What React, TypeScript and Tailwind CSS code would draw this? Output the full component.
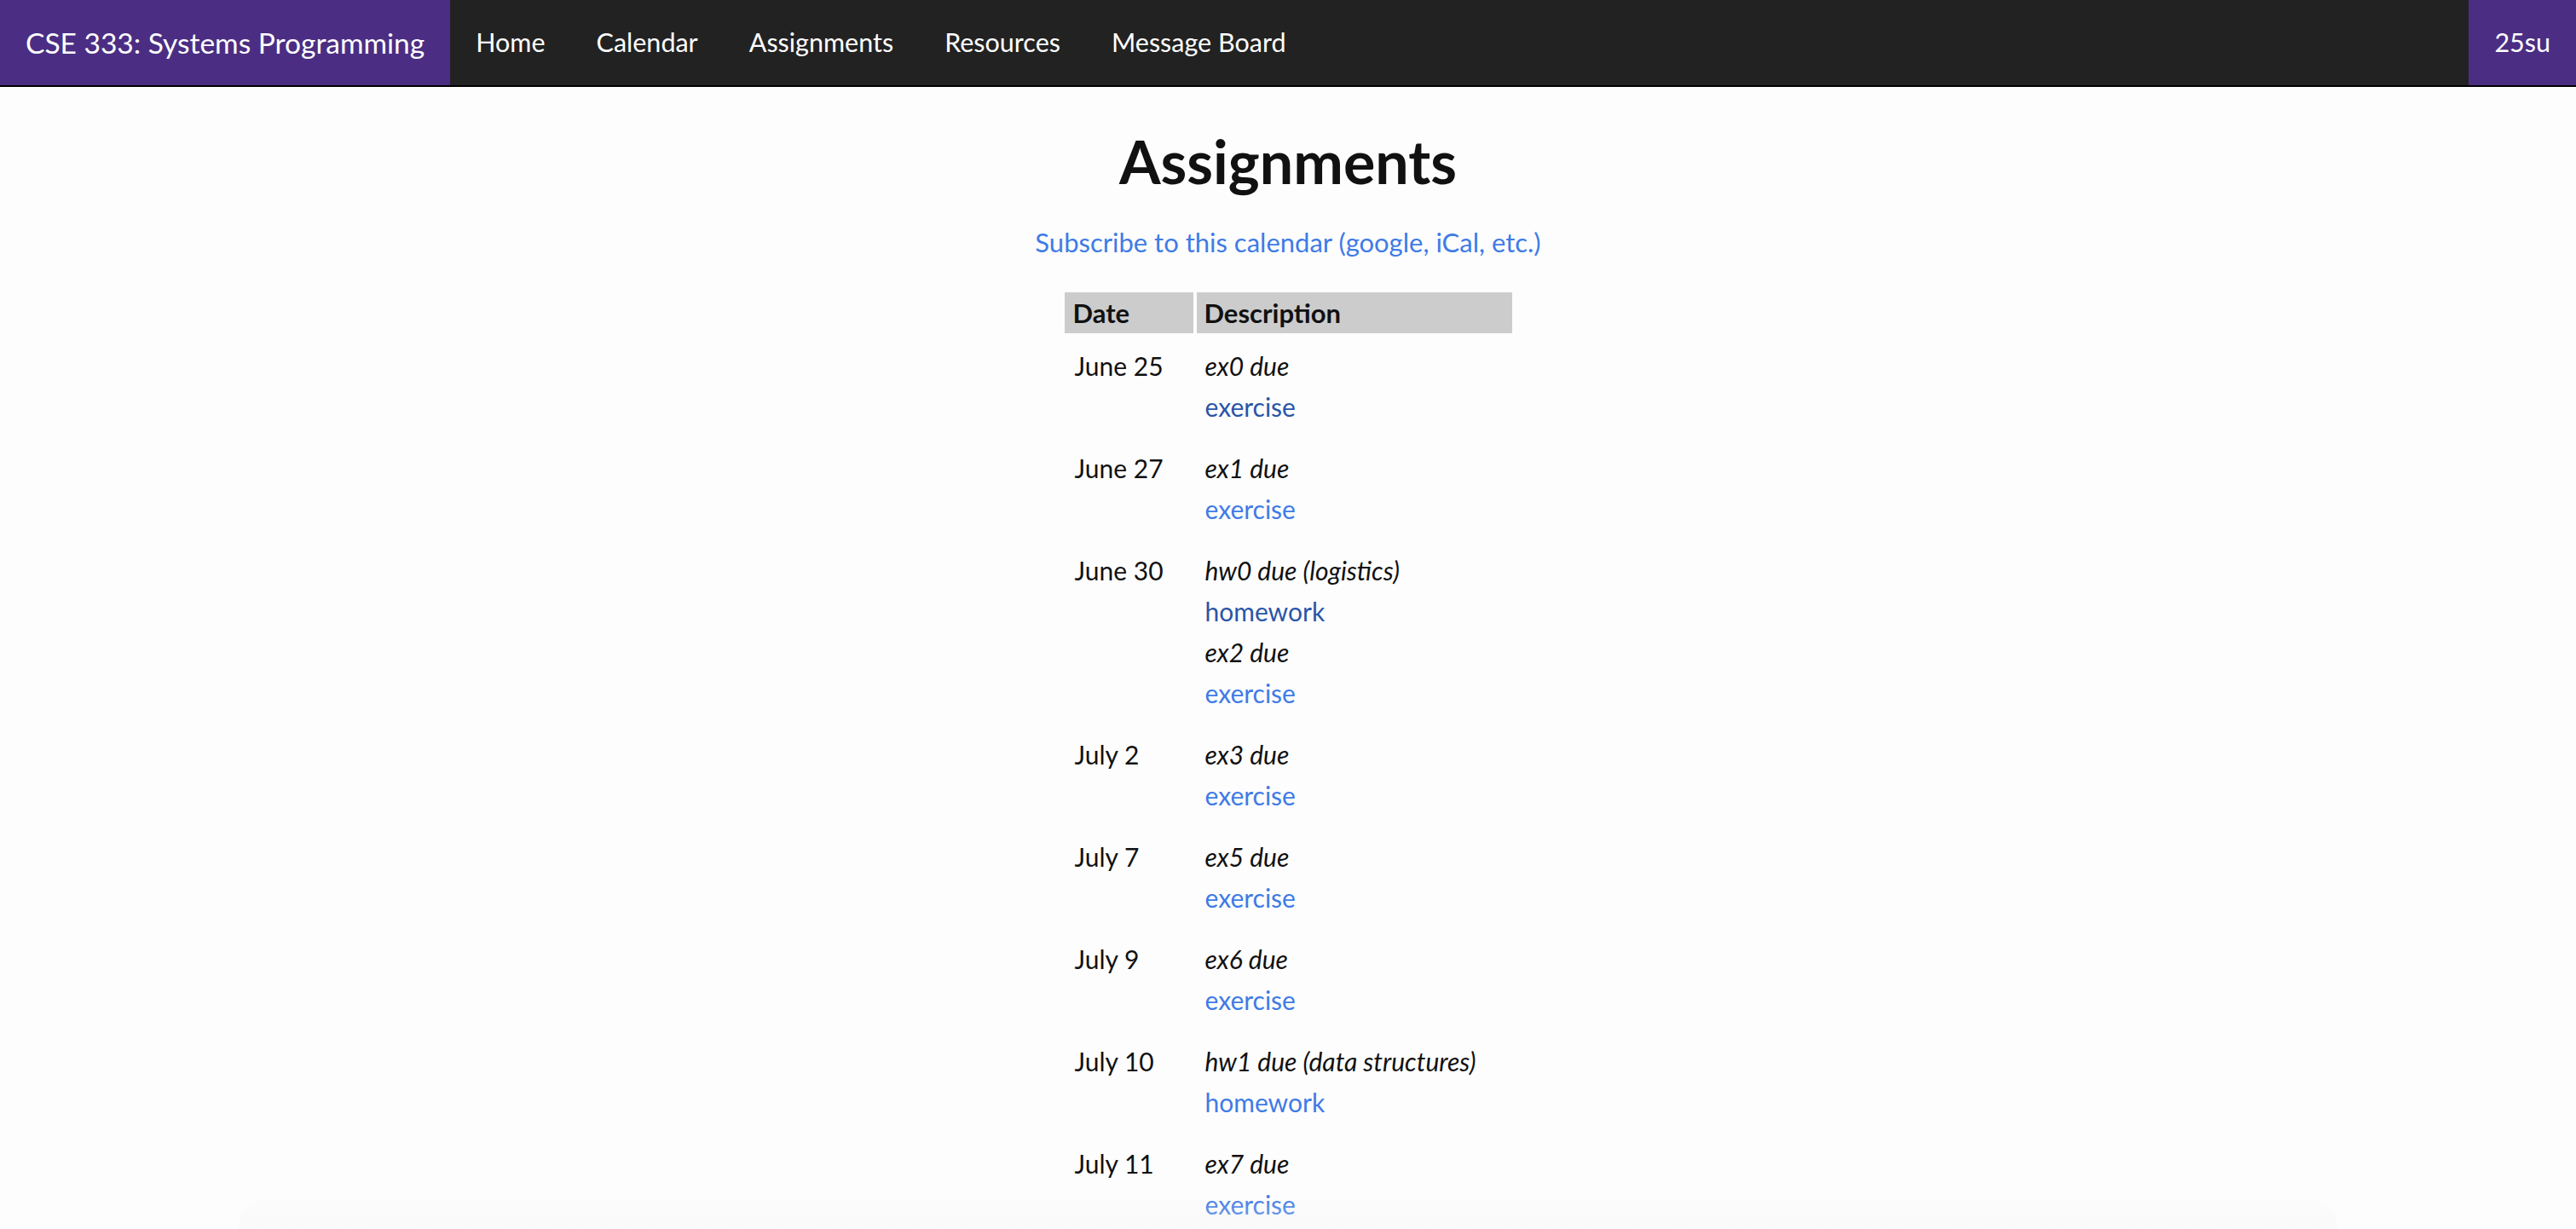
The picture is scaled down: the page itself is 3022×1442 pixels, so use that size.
import React from 'react';

type Item = { title: string; kind: string; visited?: boolean };
type Row = { date: string; items: Item[] };

const rows: Row[] = [
  { date: 'June 25', items: [{ title: 'ex0 due', kind: 'exercise', visited: true }] },
  { date: 'June 27', items: [{ title: 'ex1 due', kind: 'exercise' }] },
  {
    date: 'June 30',
    items: [
      { title: 'hw0 due (logistics)', kind: 'homework', visited: true },
      { title: 'ex2 due', kind: 'exercise' },
    ],
  },
  { date: 'July 2', items: [{ title: 'ex3 due', kind: 'exercise' }] },
  { date: 'July 7', items: [{ title: 'ex5 due', kind: 'exercise' }] },
  { date: 'July 9', items: [{ title: 'ex6 due', kind: 'exercise' }] },
  { date: 'July 10', items: [{ title: 'hw1 due (data structures)', kind: 'homework' }] },
  { date: 'July 11', items: [{ title: 'ex7 due', kind: 'exercise' }] },
  { date: 'July 14', items: [{ title: 'ex8 due', kind: 'exercise' }] },
  { date: 'July 16', items: [{ title: 'ex9 due', kind: 'exercise' }] },
];

const navLinks = ['Home', 'Calendar', 'Assignments', 'Resources', 'Message Board'];

const App = () => {
  return (
    <div className="min-h-screen bg-[#fdfdfd] text-[#111] font-['Lato','Open_Sans',sans-serif]">
      <nav className="flex h-[102px] bg-[#222] border-b-2 border-black text-white text-[30.5px]">
        <div className="flex items-center bg-[#4b2e83] px-[30px] text-[33.5px]">CSE 333: Systems Programming</div>
        {navLinks.map((link) => (
          <a key={link} href="#" className="flex items-center px-[30px]">
            {link}
          </a>
        ))}
        <div className="ml-auto flex items-center bg-[#4b2e83] px-[30px]">25su</div>
      </nav>

      <main className="flex flex-col items-center pt-[44px] pb-10">
        <h1 className="text-[70px] leading-[86px] font-bold">Assignments</h1>
        <a href="#" className="mt-[28px] text-[31px] leading-[48px] text-[#3f7be6]">
          Subscribe to this calendar (google, iCal, etc.)
        </a>

        <table className="mt-[31px] border-separate border-spacing-[4px] text-[30px] leading-[48px]">
          <thead>
            <tr className="bg-[#ccc]">
              <th className="w-[151px] pl-[10px] text-left font-bold text-[31px]">Date</th>
              <th className="w-[370px] pl-[9px] text-left font-bold text-[31px]">Description</th>
            </tr>
          </thead>
          <tbody>
            {rows.map((row) => (
              <tr key={row.date}>
                <td className="align-top pl-[12px] py-[10px]">{row.date}</td>
                <td className="align-top pl-[10px] py-[10px]">
                  {row.items.map((item) => (
                    <div key={item.title}>
                      <div className="italic">{item.title}</div>
                      <a
                        href="#"
                        className={item.visited ? 'block text-[#2a55a8]' : 'block text-[#3f7be6]'}
                      >
                        {item.kind}
                      </a>
                    </div>
                  ))}
                </td>
              </tr>
            ))}
          </tbody>
        </table>
      </main>

      <div className="pointer-events-none fixed bottom-0 inset-x-[280px] h-[40px] rounded-t-[80px] bg-gradient-to-b from-transparent to-[#f4f4f4]/40" />
    </div>
  );
};

export default App;
